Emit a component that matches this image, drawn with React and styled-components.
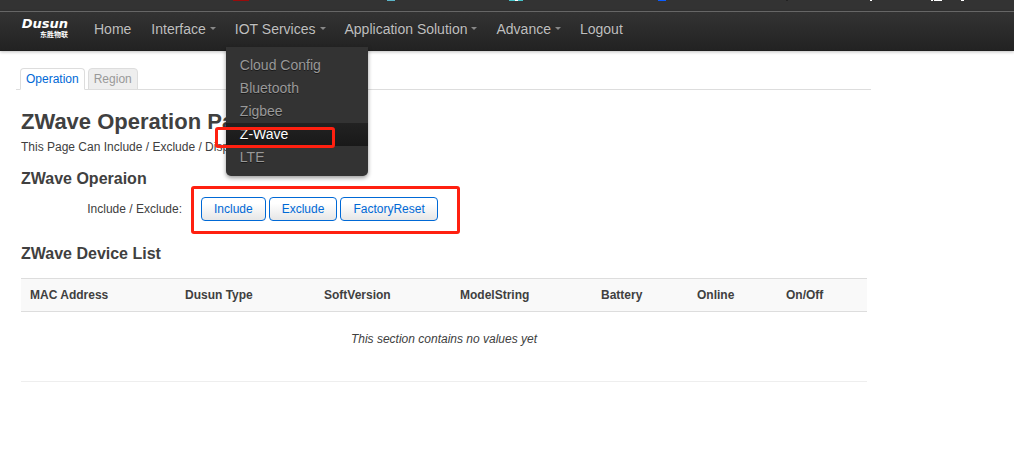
import React from "react";
import styled, { createGlobalStyle, css } from "styled-components";

const GlobalStyle = createGlobalStyle`
  *, *::before, *::after { box-sizing: border-box; }
  body {
    margin: 0;
    background: #fff;
    color: #404040;
    font: 12px/18px "Liberation Sans", Arial, sans-serif;
  }
  h2, h3, p, ul { margin: 0; padding: 0; }
  ul { list-style: none; }
  a { text-decoration: none; }
`;

const TopStrip = styled.div`
  height: 11px;
  background: #333;
`;

const StripIcons = styled.svg`
  display: block;
  overflow: visible;
`;

const NavBar = styled.header`
  position: relative;
  display: flex;
  align-items: center;
  height: 40px;
  padding: 0 20px 6px;
  border-top: 1px solid #666;
  background: linear-gradient(#333, #222);
  box-shadow: 0 1px 3px rgba(0, 0, 0, 0.25), inset 0 -1px 0 rgba(0, 0, 0, 0.1);
`;

const Brand = styled.a`
  display: flex;
  flex-direction: column;
  align-items: flex-end;
  width: 48px;
  margin-right: 16px;
  padding-bottom: 2px;
  color: #fff;
`;

const BrandName = styled.span`
  font: italic bold 13px/12px "DejaVu Sans", sans-serif;
`;

const BrandSub = styled.span`
  font: bold 7px/8px "Noto Sans CJK SC", sans-serif;
`;

const Nav = styled.ul`
  display: flex;
`;

const NavItem = styled.li`
  position: relative;
`;

const NavLink = styled.a`
  display: flex;
  align-items: center;
  padding: 0 10px;
  color: #bfbfbf;
  font-size: 14px;
  line-height: 36px;
  white-space: nowrap;
  text-shadow: 0 -1px 0 rgba(0, 0, 0, 0.25);
  ${(p) =>
    p.$caret &&
    css`
      padding-right: 9px;
      &::after {
        content: "";
        margin-left: 4px;
        border: 3px solid transparent;
        border-top-color: #888;
        border-bottom: 0;
      }
    `}
`;

const Menu = styled.ul`
  position: absolute;
  top: 36px;
  left: 1px;
  z-index: 1;
  width: 142px;
  padding: 7px 0;
  background: #333;
  border-radius: 0 0 5px 5px;
  box-shadow: 0 2px 4px rgba(0, 0, 0, 0.4);
`;

const MenuLink = styled.a`
  display: block;
  padding: 0 14px;
  font-size: 14px;
  line-height: 23px;
  color: ${(p) => (p.$active ? "#fff" : "#999")};
  background: ${(p) => (p.$active ? "linear-gradient(#222, #191919)" : "none")};
  text-shadow: 0 1px 0 rgba(0, 0, 0, 0.5);
`;

const Highlight = styled.span`
  position: absolute;
  z-index: 2;
  border: 3px solid #ff2010;
  border-radius: 3px;
  pointer-events: none;
`;

const MenuHighlight = styled(Highlight)`
  inset: 80px 33px 28px -11px;
`;

const ButtonsHighlight = styled(Highlight)`
  inset: -11px -22px -13px -10px;
`;

const Page = styled.main`
  max-width: 871px;
  padding: 17px 0 0 16px;
`;

const Tabs = styled.ul`
  display: flex;
  gap: 3px;
  padding-left: 4px;
  border-bottom: 1px solid #ddd;
`;

const Tab = styled.a`
  display: block;
  margin-bottom: -1px;
  padding: 0 5px;
  border: 1px solid #ddd;
  border-radius: 4px 4px 0 0;
  line-height: 20px;
  color: ${(p) => (p.$active ? "#0069d6" : "#999")};
  background: ${(p) => (p.$active ? "#fff" : "#eee")};
  border-bottom-color: ${(p) => (p.$active ? "#fff" : "#ddd")};
`;

const Content = styled.div`
  padding: 14px 4px 0 5px;
`;

const Title = styled.h2`
  font-size: 22px;
  line-height: 36px;
`;

const Intro = styled.p`
  line-height: 14px;
`;

const Section = styled.section`
  padding-top: 7px;
`;

const SectionTitle = styled.h3`
  font-size: 16px;
  line-height: 36px;
`;

const Field = styled.div`
  display: flex;
  align-items: center;
  gap: 19px;
  padding-bottom: 8px;
`;

const FieldLabel = styled.span`
  width: 161px;
  text-align: right;
`;

const ButtonGroup = styled.div`
  position: relative;
  display: flex;
  gap: 3px;
`;

const Button = styled.button`
  height: 24px;
  padding: 0 12px;
  border: 1px solid #0069d6;
  border-radius: 4px;
  background: linear-gradient(#fff 25%, #e6e6e6);
  color: #0069d6;
  font: inherit;
`;

const DeviceTable = styled.table`
  width: 100%;
  margin-top: 6px;
  table-layout: fixed;
  border-collapse: collapse;
  border-bottom: 1px solid #eee;
`;

const HeadCell = styled.th`
  width: ${(p) => p.$width}px;
  height: 33px;
  padding: 0 9px;
  border: solid #ddd;
  border-width: 1px 0;
  background: #f9f9f9;
  text-align: left;
`;

const EmptyCell = styled.td`
  height: 70px;
  padding: 0 0 16px;
  text-align: center;
  font-style: italic;
`;

const services = ["Cloud Config", "Bluetooth", "Zigbee", "Z-Wave", "LTE"];

const links = [
  { label: "Home" },
  { label: "Interface", caret: true },
  { label: "IOT Services", caret: true, items: services },
  { label: "Application Solution", caret: true },
  { label: "Advance", caret: true },
  { label: "Logout" },
];

const columns = [
  ["MAC Address", 155],
  ["Dusun Type", 139],
  ["SoftVersion", 136],
  ["ModelString", 141],
  ["Battery", 96],
  ["Online", 89],
  ["On/Off", 90],
];

export default function App() {
  return (
    <>
      <GlobalStyle />
      <TopStrip>
        <StripIcons width="1" height="1" aria-hidden="true">
          <path d="M233 0h16v1h-16z" fill="#980b0b" />
          <path d="M387 0h8v1h-8z" fill="#5bb5c9" />
          <path d="M509 0h14v1h-14z" fill="#45c5cb" />
          <path d="M515 0h3v1h-3z" fill="#fff" />
          <path d="M658 0h8v1h-8z" fill="#0a5cff" />
          <path d="M786 0h2v1h-2z" fill="#222" />
          <path d="M870 0h2v1h-2zM931 0h2v1h-2zM934 0h8v1h-8zM961 0h3v1h-3z" fill="#fff" />
        </StripIcons>
      </TopStrip>
      <NavBar>
        <Brand href="#">
          <BrandName>Dusun</BrandName>
          <BrandSub>东胜物联</BrandSub>
        </Brand>
        <nav>
          <Nav>
            {links.map(({ label, caret, items }) => (
              <NavItem key={label}>
                <NavLink href="#" $caret={caret}>
                  {label}
                </NavLink>
                {items && (
                  <Menu>
                    {items.map((item) => (
                      <li key={item}>
                        <MenuLink href="#" $active={item === "Z-Wave"}>
                          {item}
                        </MenuLink>
                      </li>
                    ))}
                    <MenuHighlight as="li" aria-hidden="true" />
                  </Menu>
                )}
              </NavItem>
            ))}
          </Nav>
        </nav>
      </NavBar>
      <Page>
        <Tabs>
          <li>
            <Tab href="#" $active>
              Operation
            </Tab>
          </li>
          <li>
            <Tab href="#">Region</Tab>
          </li>
        </Tabs>
        <Content>
          <Title>ZWave Operation Page</Title>
          <Intro>This Page Can Include / Exclude / Display</Intro>
          <Section>
            <SectionTitle>ZWave Operaion</SectionTitle>
            <Field>
              <FieldLabel id="include-label">Include / Exclude:</FieldLabel>
              <ButtonGroup role="group" aria-labelledby="include-label">
                <Button type="button">Include</Button>
                <Button type="button">Exclude</Button>
                <Button type="button">FactoryReset</Button>
                <ButtonsHighlight aria-hidden="true" />
              </ButtonGroup>
            </Field>
          </Section>
          <Section>
            <SectionTitle>ZWave Device List</SectionTitle>
            <DeviceTable>
              <thead>
                <tr>
                  {columns.map(([name, width]) => (
                    <HeadCell key={name} scope="col" $width={width}>
                      {name}
                    </HeadCell>
                  ))}
                </tr>
              </thead>
              <tbody>
                <tr>
                  <EmptyCell colSpan={columns.length}>
                    This section contains no values yet
                  </EmptyCell>
                </tr>
              </tbody>
            </DeviceTable>
          </Section>
        </Content>
      </Page>
    </>
  );
}
